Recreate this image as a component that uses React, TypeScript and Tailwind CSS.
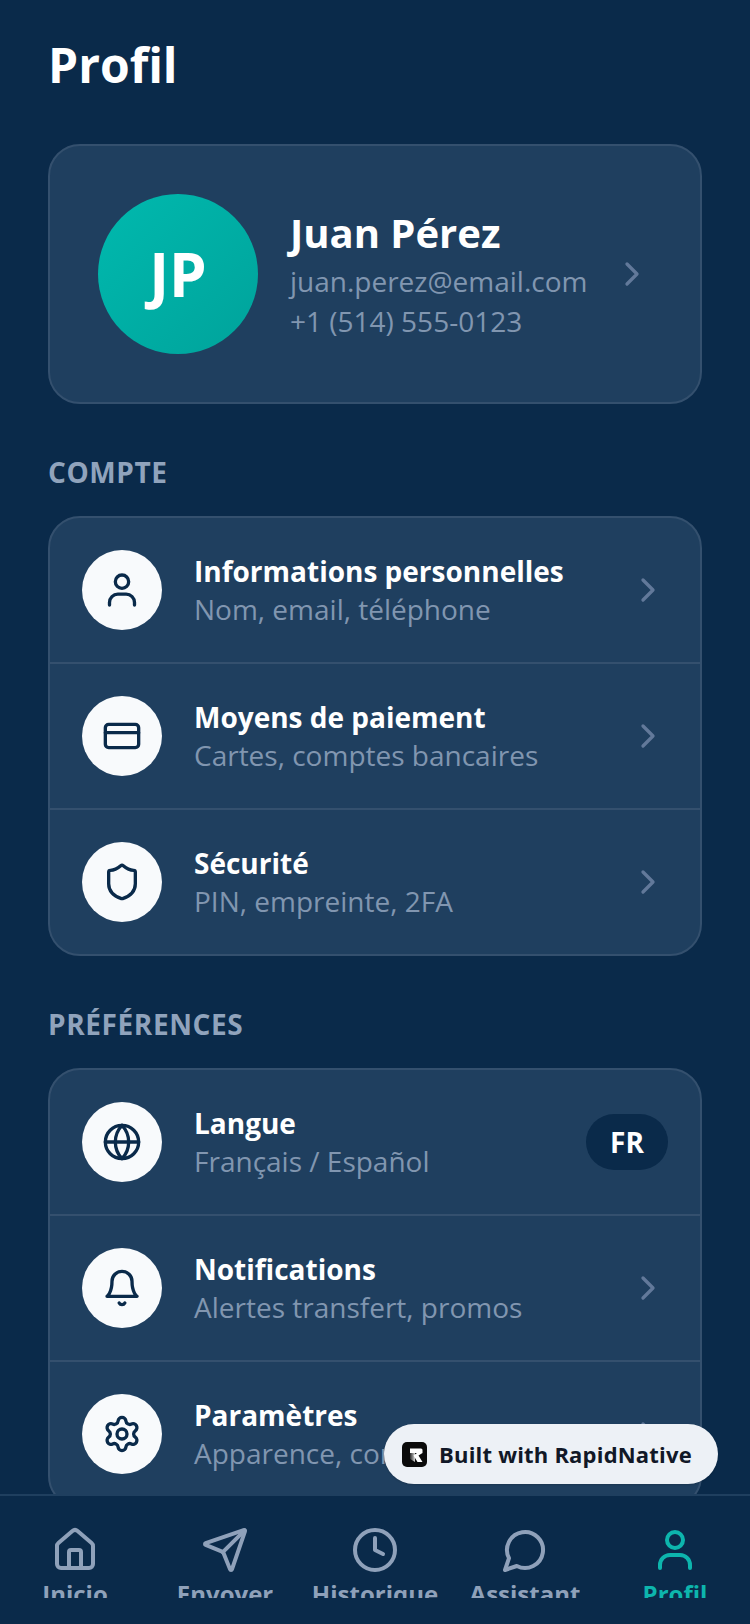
import { ChevronRight, Clock, CreditCard, Globe, House, Send, Settings, Shield } from "lucide-react";
import type { ComponentType, ReactNode } from "react";

type IconProps = { className?: string; size?: number; strokeWidth?: number };
type IconType = ComponentType<IconProps>;

function Person({ className, size = 40 }: IconProps) {
  return (
    <svg width={size} height={size} viewBox="0 0 24 24" fill="none" stroke="currentColor" strokeWidth="2" strokeLinecap="round" strokeLinejoin="round" className={className}>
      <circle cx="12" cy="7" r="4" />
      <path d="M4.5 21v-1.5a5 5 0 0 1 5-5h5a5 5 0 0 1 5 5V21" />
    </svg>
  );
}

function Bubble({ className, size = 48 }: IconProps) {
  return (
    <svg width={size} height={size} viewBox="0 0 24 24" fill="none" stroke="currentColor" strokeWidth="2" strokeLinecap="round" strokeLinejoin="round" className={className}>
      <path d="M7.9 20A9 9 0 1 0 4 16.1L2 22Z" />
    </svg>
  );
}

function BellIcon({ className, size = 40 }: IconProps) {
  return (
    <svg width={size} height={size} viewBox="0 0 24 24" fill="none" stroke="currentColor" strokeWidth="2" strokeLinecap="round" strokeLinejoin="round" className={className}>
      <path d="M6 8a6 6 0 0 1 12 0c0 7 3 9 3 9H3s3-2 3-9" />
      <path d="M10.3 21a1.94 1.94 0 0 0 3.4 0" />
    </svg>
  );
}

type RowProps = {
  icon: IconType;
  title: string;
  subtitle: string;
  right?: ReactNode;
  last?: boolean;
};

function Row({ icon: Icon, title, subtitle, right, last }: RowProps) {
  return (
    <div className={`flex items-center px-8 ${last ? "h-[144px]" : "h-[146px] border-b-2 border-[#34506e]"}`}>
      <div className="flex h-20 w-20 shrink-0 items-center justify-center rounded-full bg-[#f8fafc]">
        <Icon size={40} strokeWidth={2} className="text-[#0a2a4a]" />
      </div>
      <div className="ml-8 flex-1">
        <div className="text-[28px] leading-[38px] font-bold text-white">{title}</div>
        <div className="text-[28px] leading-[38px] text-[#8196b0]">{subtitle}</div>
      </div>
      {right ?? <ChevronRight size={40} strokeWidth={2} className="text-[#62799a]" />}
    </div>
  );
}

function Section({ label, children }: { label: string; children: ReactNode }) {
  return (
    <div className="mt-[48px]">
      <div className="mb-[24px] text-[28px] leading-[40px] font-bold tracking-[0.6px] text-[#90a3bc]">{label}</div>
      <div className="overflow-hidden rounded-[32px] border-2 border-[#34506e] bg-[#1f3f5f]">{children}</div>
    </div>
  );
}

const tabs: { icon: IconType; label: string; active?: boolean }[] = [
  { icon: House, label: "Inicio" },
  { icon: Send, label: "Envoyer" },
  { icon: Clock, label: "Historique" },
  { icon: Bubble, label: "Assistant" },
  { icon: Person, label: "Profil", active: true },
];

export default function App() {
  return (
    <div
      className="relative flex h-[1624px] w-[750px] flex-col overflow-hidden bg-[#0a2a4a]"
      style={{ fontFamily: '"Open Sans", sans-serif' }}
    >
      <div className="h-[1494px] shrink-0 overflow-hidden px-[48px] pt-[32px]">
        <h1 className="text-[48px] leading-[66px] font-bold text-white">Profil</h1>

        <div className="mt-[46px] flex h-[260px] items-center rounded-[32px] border-2 border-[#34506e] bg-[#1f3f5f] px-[48px]">
          <div className="flex h-40 w-40 shrink-0 items-center justify-center rounded-full bg-gradient-to-br from-[#00b9ae] to-[#00a39b] text-[60px] font-bold text-white">
            JP
          </div>
          <div className="ml-[32px] flex-1">
            <div className="mb-[1px] -mt-[1px] text-[40px] leading-[54px] font-bold text-white">Juan Pérez</div>
            <div className="text-[28px] leading-[40px] text-[#8196b0]">juan.perez@email.com</div>
            <div className="text-[28px] leading-[40px] text-[#8196b0]">+1 (514) 555-0123</div>
          </div>
          <ChevronRight size={40} strokeWidth={2} className="text-[#62799a]" />
        </div>

        <Section label="COMPTE">
          <Row icon={Person} title="Informations personnelles" subtitle="Nom, email, téléphone" />
          <Row icon={CreditCard} title="Moyens de paiement" subtitle="Cartes, comptes bancaires" />
          <Row icon={Shield} title="Sécurité" subtitle="PIN, empreinte, 2FA" last />
        </Section>

        <Section label="PRÉFÉRENCES">
          <Row
            icon={Globe}
            title="Langue"
            subtitle="Français / Español"
            right={
              <div className="flex h-14 w-[82px] items-center justify-center rounded-full bg-[#0a2a4a] text-[28px] font-bold text-white">
                FR
              </div>
            }
          />
          <Row icon={BellIcon} title="Notifications" subtitle="Alertes transfert, promos" />
          <Row icon={Settings} title="Paramètres" subtitle="Apparence, confidentialité" last />
        </Section>
      </div>

      <nav className="flex h-[130px] shrink-0 items-start border-t-2 border-[#1f3f5f] bg-[#0a2a4a] pt-[30px]">
        {tabs.map(({ icon: Icon, label, active }) => (
          <div key={label} className="flex w-[150px] flex-col items-center">
            <Icon size={48} strokeWidth={2} className={active ? "text-[#0db5ad]" : "text-[#8fa1ba]"} />
            <div className={`mt-[4px] h-[20px] overflow-hidden text-[24px] leading-[32px] font-bold ${active ? "text-[#0db5ad]" : "text-[#8fa1ba]"}`}>
              {label}
            </div>
          </div>
        ))}
      </nav>

      {/* floating badge */}
      <div className="absolute top-[1424px] left-[384px] flex h-[60px] w-[334px] items-center gap-[12px] rounded-full bg-[#edf1f6] pl-[18px] shadow-[0_1px_2px_rgba(0,0,0,0.15)]">
        <svg width="25" height="25" viewBox="0 0 25 25">
          <defs>
            <linearGradient id="stem" x1="0" y1="0" x2="1" y2="0">
              <stop offset="0" stopColor="#2a2a2a" />
              <stop offset="1" stopColor="#d8d8d8" />
            </linearGradient>
          </defs>
          <rect width="25" height="25" rx="5" fill="#0b0b0b" />
          <path d="M8 11h5v9l-5-3z" fill="url(#stem)" />
          <path d="M8 6.5h11a1.5 1.5 0 0 1 1.5 1.5v3L16.5 13.5l4 6.5h-5l-4-6.5 3.5-2.5H8z" fill="#fff" />
        </svg>
        <span className="text-[22px] font-bold tracking-[0.2px] text-[#111827]">Built with RapidNative</span>
      </div>
    </div>
  );
}
